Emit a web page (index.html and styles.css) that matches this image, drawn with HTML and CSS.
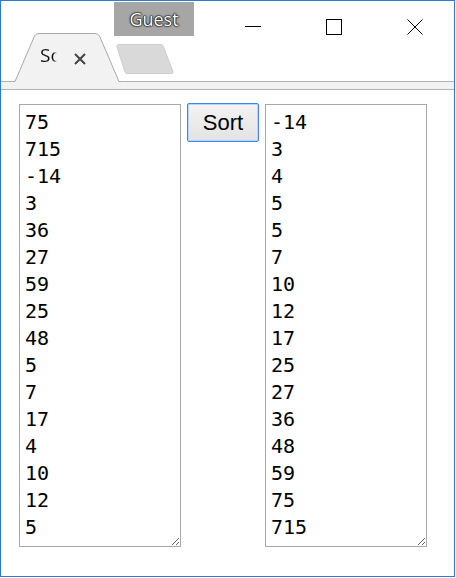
FILE: index.html
```
<!DOCTYPE html>
<html>
<head>
<meta charset="utf-8">
<link rel="stylesheet" href="styles.css">
</head>
<body>
<div class="window">
  <div class="chrome">
    <div class="titlebar">
      <div class="controls">
        <div class="ctl"><svg width="16" height="16" viewBox="0 0 16 16"><line x1="0" y1="7.5" x2="16" y2="7.5" stroke="#000" stroke-width="1"/></svg></div>
        <div class="ctl"><svg width="16" height="16" viewBox="0 0 16 16"><rect x="0.5" y="0.5" width="15" height="15" fill="none" stroke="#000" stroke-width="1"/></svg></div>
        <div class="ctl ctl-close"><svg width="16" height="16" viewBox="0 0 16 16"><path d="M0.5 0.5 L15.5 15.5 M15.5 0.5 L0.5 15.5" stroke="#000" stroke-width="1" fill="none"/></svg></div>
      </div>
    </div>
    <div class="strip"></div>
    <div class="tab">
      <svg class="tab-shape" width="125" height="52" viewBox="0 0 125 52">
        <path d="M13 52 L14 50.5 L33.5 5 Q35 2.5 38 2.5 L94 2.5 Q97 2.5 98.5 5 L118 50.5 L119 52 Z" fill="#f2f2f2"/>
        <path d="M12 50.5 L14 50.5 L33.5 5 Q35 2.5 38 2.5 L94 2.5 Q97 2.5 98.5 5 L118 50.5 L120 50.5" fill="none" stroke="#a9a9a9" stroke-width="1"/>
      </svg>
      <span class="tab-title">So</span>
      <svg class="tab-close" width="12" height="12" viewBox="0 0 12 12"><path d="M1 1 L11 11 M11 1 L1 11" stroke="#444" stroke-width="2" fill="none"/></svg>
    </div>
    <svg class="newtab" width="62" height="34" viewBox="0 0 62 34">
      <path d="M4.5 2.5 L47 2.5 Q48.5 2.5 49 4 L59 29.5 Q59.5 31.5 57.5 31.5 L13 31.5 Q11.5 31.5 11 30 L2.8 4.5 Q2.5 2.5 4.5 2.5 Z" fill="#d9d9d9" stroke="#cdcdcd" stroke-width="1"/>
    </svg>
    <div class="guest">Guest</div>
  </div>
  <div class="content">
    <textarea class="box">75
715
-14
3
36
27
59
25
48
5
7
17
4
10
12
5</textarea>
    <button class="sort-btn">Sort</button>
    <textarea class="box">-14
3
4
5
5
7
10
12
17
25
27
36
48
59
75
715</textarea>
  </div>
</div>
</body>
</html>
```
FILE: styles.css
```
html, body {
  margin: 0;
  padding: 0;
  background: #ffffff;
}

.window {
  width: 455px;
  height: 577px;
  box-sizing: border-box;
  border: 1px solid #2b7bd3;
  background: #ffffff;
  overflow: hidden;
}

.chrome {
  position: relative;
  height: 89px;
}

.titlebar {
  height: 80px;
  display: flex;
}

.controls {
  margin-left: auto;
  display: flex;
  height: 52px;
}

.ctl {
  width: 81px;
  box-sizing: border-box;
  padding: 18px 0 0 32px;
}

.ctl svg {
  display: block;
}

.ctl-close {
  width: 79px;
}

.strip {
  height: 7px;
  border-top: 1px solid #b2b2b2;
  border-bottom: 1px solid #b2b2b2;
  background: #f2f2f2;
}

.tab {
  position: absolute;
  left: 0;
  top: 30px;
  width: 125px;
  height: 52px;
  box-sizing: border-box;
  padding: 12px 0 0 39px;
  display: flex;
  align-items: flex-start;
}

.tab-shape {
  position: absolute;
  left: 0;
  top: 0;
}

.tab-title {
  position: relative;
  width: 22px;
  white-space: nowrap;
  font-family: "Open Sans", "Noto Sans", sans-serif;
  font-size: 19px;
  line-height: 25px;
  color: #111111;
  -webkit-mask-image: linear-gradient(to right, #000 0, #000 13px, transparent 17px);
  mask-image: linear-gradient(to right, #000 0, #000 13px, transparent 17px);
}

.tab-close {
  position: relative;
  margin: 10px 0 0 12px;
  display: block;
}

.newtab {
  position: absolute;
  left: 113px;
  top: 41px;
}

.guest {
  position: absolute;
  left: 113px;
  top: 1px;
  width: 80px;
  height: 34px;
  background: #a6a6a6;
  display: flex;
  align-items: center;
  justify-content: center;
  font-family: "Open Sans", "Noto Sans", sans-serif;
  font-size: 18px;
  color: #ffffff;
  text-shadow: 0 0 1px #000, 0 0 1px #000, 0 0 2px #222, 0 0 2px #222;
}

.content {
  display: flex;
  align-items: flex-start;
  gap: 6px;
  padding: 14px 0 0 18px;
}

.box {
  width: 162px;
  height: 443px;
  box-sizing: border-box;
  margin: 0;
  border: 1px solid #a9a9a9;
  padding: 4px 4px 0 5px;
  font-family: "DejaVu Sans Mono", monospace;
  font-size: 20px;
  line-height: 27px;
  color: #000000;
  background: #ffffff;
  resize: both;
  overflow: hidden;
  outline: none;
}

.sort-btn {
  width: 72px;
  height: 39px;
  margin: -1px 0 0 0;
  padding: 0;
  box-sizing: border-box;
  border: 1px solid #3f88f2;
  border-radius: 2px;
  box-shadow: inset 0 0 0 1px #b9d4fa;
  background: linear-gradient(#f3f3f3, #e3e3e3);
  font-family: "Liberation Sans", Arial, sans-serif;
  font-size: 22px;
  color: #000000;
}
```
